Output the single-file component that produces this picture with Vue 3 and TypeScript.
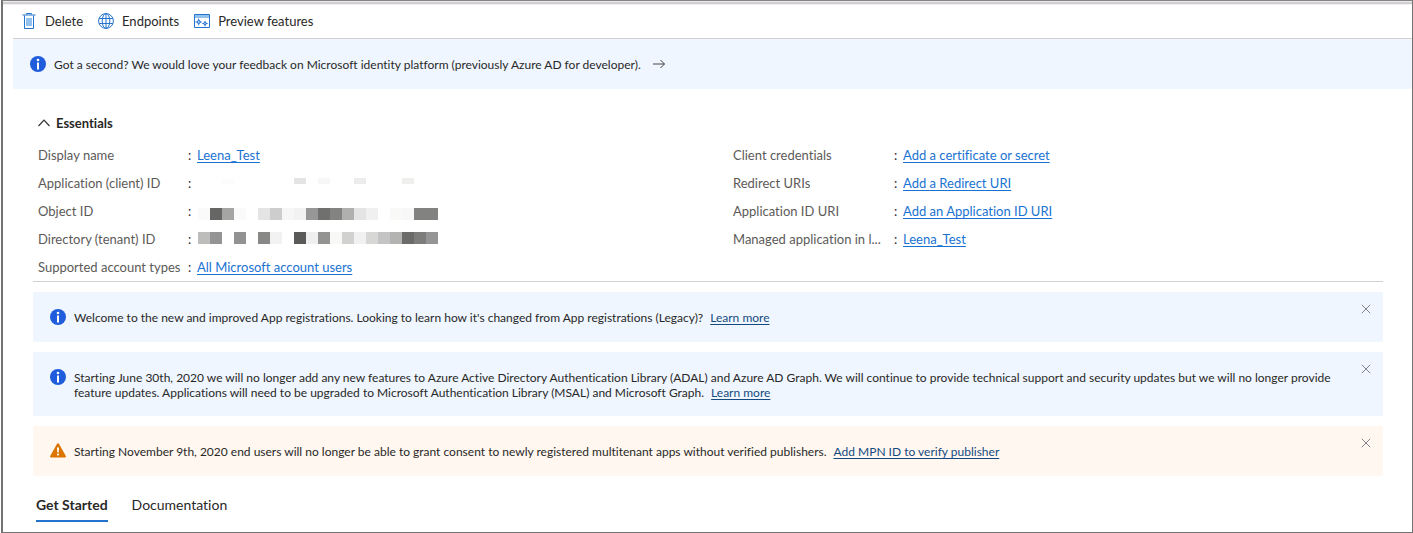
<script setup lang="ts">
interface Property {
  label: string
  link?: string
  mask?: { y: number; height: number; cells: string[] }
}

interface Notice {
  kind: 'info' | 'warning'
  text: string
  link: string
}

const leftProperties: Property[] = [
  { label: 'Display name', link: 'Leena_Test' },
  {
    label: 'Application (client) ID',
    mask: {
      y: 8,
      height: 6,
      cells: ['', '', '#fcfcfc', '', '', '', '', '', '#e4e4e4', '', '#f7f7f7', '', '', '#ececec', '', '', '', '#efefee', '', ''],
    },
  },
  {
    label: 'Object ID',
    mask: {
      y: 10,
      height: 12,
      cells: ['#fafafa', '#666664', '#a5a5a4', '#fafafa', '', '#e4e4e4', '#cdcdcd', '#f6f6f6', '#f2f2f2', '#979797', '#70706e', '#838382', '#b0b0af', '#e4e4e4', '#f0f0f0', '', '#f9f9f8', '#f7f7f7', '#828281', '#828281'],
    },
  },
  {
    label: 'Directory (tenant) ID',
    mask: {
      y: 6,
      height: 12,
      cells: ['#bdbdbc', '#949494', '', '#929292', '', '#888887', '#f2f2f2', '', '#5a5a58', '#efefef', '#939392', '#f8f8f7', '#d1d1d0', '#f1f1f1', '#d7d7d6', '#c4c4c4', '#b3b3b2', '#6b6b69', '#7d7d7c', '#959595'],
    },
  },
  { label: 'Supported account types', link: 'All Microsoft account users' },
]

const rightProperties: Property[] = [
  { label: 'Client credentials', link: 'Add a certificate or secret' },
  { label: 'Redirect URIs', link: 'Add a Redirect URI' },
  { label: 'Application ID URI', link: 'Add an Application ID URI' },
  { label: 'Managed application in l...', link: 'Leena_Test' },
]

const columns = [
  { name: 'identity', items: leftProperties },
  { name: 'credentials', items: rightProperties },
]

const notices: Notice[] = [
  {
    kind: 'info',
    text: "Welcome to the new and improved App registrations. Looking to learn how it's changed from App registrations (Legacy)?",
    link: 'Learn more',
  },
  {
    kind: 'info',
    text: 'Starting June 30th, 2020 we will no longer add any new features to Azure Active Directory Authentication Library (ADAL) and Azure AD Graph. We will continue to provide technical support and security updates but we will no longer provide feature updates. Applications will need to be upgraded to Microsoft Authentication Library (MSAL) and Microsoft Graph.',
    link: 'Learn more',
  },
  {
    kind: 'warning',
    text: 'Starting November 9th, 2020 end users will no longer be able to grant consent to newly registered multitenant apps without verified publishers.',
    link: 'Add MPN ID to verify publisher',
  },
]
</script>

<template>
  <main class="blade">
    <div class="toolbar" role="toolbar" aria-label="Application actions">
      <button type="button" class="command">
        <svg class="icon" viewBox="0 0 16 16" fill="none" stroke="#2474cf" aria-hidden="true">
          <path d="M1.500 2h13M5.500 1.500V.5h5v1M3.500 2.500v13h9v-13" />
          <path d="M5 5h6v8H5z" fill="#92c1ed" stroke="none" />
        </svg>
        <span>Delete</span>
      </button>
      <button type="button" class="command">
        <svg class="icon" viewBox="0 0 16 16" fill="none" stroke="#2474cf" aria-hidden="true">
          <circle cx="8" cy="8" r="7.400" />
          <ellipse cx="8" cy="8" rx="3.800" ry="7.400" />
          <path d="M8 .5v15M1.200 5.500h13.600M1.200 10.500h13.600" />
        </svg>
        <span>Endpoints</span>
      </button>
      <button type="button" class="command">
        <svg class="icon" viewBox="0 0 16 16" fill="none" stroke="#2474cf" aria-hidden="true">
          <path d="M.5 1.500h15v13H.5z" />
          <path d="M1 2h14v3H1z" fill="#92c1ed" stroke="none" />
          <path d="M4.700 6.900q.5 1.600 2.100 2.100-1.600.5-2.100 2.100-.5-1.600-2.100-2.100 1.600-.5 2.100-2.100z" stroke-width="1.200" />
          <path d="M11 8.800q.5 1.300 1.800 1.800-1.300.5-1.800 1.800-.5-1.300-1.800-1.800 1.300-.5 1.800-1.800z" stroke-width="1.100" />
        </svg>
        <span>Preview features</span>
      </button>
    </div>

    <a href="#feedback" class="feedback">
      <svg class="icon" viewBox="0 0 16 16" aria-hidden="true">
        <circle cx="8" cy="8" r="8" fill="#1f5ddd" />
        <path d="M7 6.500h2v7H7z" fill="#fff" />
        <circle cx="8" cy="4" r="1.300" fill="#fff" />
      </svg>
      <span>Got a second? We would love your feedback on Microsoft identity platform (previously Azure AD for developer).</span>
      <svg class="arrow" viewBox="0 0 12 10" fill="none" stroke="#444" aria-hidden="true">
        <path d="M0 5h11.500M7.500 1l4 4-4 4" />
      </svg>
    </a>

    <section class="essentials">
      <button type="button" class="essentials-toggle" aria-expanded="true">
        <svg class="chevron" viewBox="0 0 12 8" fill="none" stroke="#323130" stroke-width="1.200" aria-hidden="true">
          <path d="M.5 7 6 1.200 11.500 7" />
        </svg>
        <span>Essentials</span>
      </button>
      <div class="columns">
        <dl v-for="column in columns" :key="column.name" :class="['properties', column.name]">
          <div v-for="item in column.items" :key="item.label" class="property">
            <dt>{{ item.label }}</dt>
            <dd>
              <span class="colon">:</span>
              <a v-if="item.link" href="#property">{{ item.link }}</a>
              <svg v-else-if="item.mask" class="mask" viewBox="0 0 240 28" shape-rendering="crispEdges" aria-hidden="true">
                <template v-for="(fill, i) in item.mask.cells" :key="i">
                  <rect v-if="fill" :x="i * 12" :y="item.mask.y" width="12" :height="item.mask.height" :fill="fill" />
                </template>
              </svg>
            </dd>
          </div>
        </dl>
      </div>
    </section>

    <section class="notices" aria-label="Notices">
      <div v-for="notice in notices" :key="notice.text" :class="['notice', notice.kind]">
        <svg v-if="notice.kind === 'info'" class="icon" viewBox="0 0 16 16" aria-hidden="true">
          <circle cx="8" cy="8" r="8" fill="#1f5ddd" />
          <path d="M7 6.500h2v7H7z" fill="#fff" />
          <circle cx="8" cy="4" r="1.300" fill="#fff" />
        </svg>
        <svg v-else class="icon" viewBox="0 0 16 16" aria-hidden="true">
          <path d="M6.800 1.200q1.200-1.800 2.400 0l6.500 11.600q.8 1.700-.9 1.700H1.200q-1.700 0-.9-1.700z" fill="#db7500" />
          <path d="M7 4.500h2l-.3 5H7.300z" fill="#fff" />
          <circle cx="8" cy="11.500" r="1.100" fill="#fff" />
        </svg>
        <p>{{ notice.text }}<a href="#details">{{ notice.link }}</a></p>
        <button type="button" class="close" aria-label="Dismiss">
          <svg viewBox="0 0 10 10" fill="none" stroke="#77777f" stroke-width=".9" aria-hidden="true">
            <path d="M.8.8l8.400 8.400M9.200.8.8 9.200" />
          </svg>
        </button>
      </div>
    </section>

    <nav class="tabs" aria-label="Sections">
      <a href="#get-started" class="tab active" aria-current="page">Get Started</a>
      <a href="#documentation" class="tab">Documentation</a>
    </nav>
  </main>
</template>

<style>
body {
  margin: 0;
  background: #fff;
}
</style>

<style scoped>
.blade {
  box-sizing: border-box;
  min-height: 100vh;
  margin-left: 1px;
  padding-left: 10px;
  border: 1px solid #737373;
  border-left: 2px solid #737373;
  border-top-color: #858286;
  box-shadow: inset 0 1px #eeecee, inset 0 3px #d2cfd3, inset 0 4px #f1f0f1;
  color: #292827;
  font-family: Lato, "Noto Sans", sans-serif;
  font-size: 12px;
  font-variant-ligatures: none;
  line-height: 15px;
}

button {
  padding: 0;
  border: 0;
  background: none;
  color: inherit;
  font: inherit;
}

.icon {
  flex: none;
  width: 16px;
  height: 16px;
}

.toolbar {
  display: flex;
  gap: 15px;
  height: 35px;
  padding: 2px 8px 0;
  border-bottom: 1px solid #d2d0d0;
}

.command {
  display: flex;
  align-items: center;
  gap: 8px;
  font-size: 13px;
  line-height: 18px;
}

.feedback {
  display: flex;
  align-items: center;
  gap: 8px;
  min-height: 50px;
  padding-left: 17px;
  background: #eff6ff;
  border-radius: 2px;
  color: inherit;
  text-decoration: none;
}

.arrow {
  width: 12px;
  height: 10px;
  margin-left: 4px;
}

.essentials {
  margin: 0 29px 0 20px;
  padding: 24px 5px 0;
  border-bottom: 1px solid #d2d0d0;
}

.essentials-toggle {
  display: flex;
  align-items: center;
  gap: 6px;
  height: 20px;
  font-size: 13px;
  font-weight: 700;
}

.chevron {
  width: 12px;
  height: 8px;
}

.columns {
  display: grid;
  grid-template-columns: 695fr 645fr;
  margin-top: 9px;
  font-size: 13px;
}

.properties {
  margin: 0;
}

.property {
  display: grid;
  grid-template-columns: 150px 1fr;
  height: 28px;
  line-height: 26px;
}

.credentials .property {
  grid-template-columns: 161px 1fr;
}

.identity .property:last-child {
  height: 27px;
}

dt {
  color: #5c5a58;
  white-space: nowrap;
}

dd {
  display: flex;
  margin: 0;
}

.colon {
  width: 9px;
}

dd a {
  color: #1a73d2;
  text-underline-offset: 2px;
}

.mask {
  width: 240px;
  height: 28px;
  margin-left: 1px;
}

.notices {
  display: grid;
  gap: 10px;
  margin: 10px 29px 0 20px;
}

.notice {
  box-sizing: border-box;
  display: flex;
  align-items: flex-start;
  gap: 8px;
  min-height: 50px;
  padding: 17px 12px 16px 17px;
  border-radius: 2px;
}

.notice.info {
  background: #eff6ff;
}

.notice.warning {
  background: #fff7f0;
}

.notice p {
  flex: 1;
  margin: 0;
  padding: 1px 0 0;
}

.notice p a {
  margin-left: 7px;
  color: #154a80;
  text-underline-offset: 2px;
}

.close {
  flex: none;
  width: 10px;
  height: 10px;
  margin: -5px 0 0 16px;
}

.close svg {
  display: block;
  width: 10px;
  height: 10px;
}

.tabs {
  display: flex;
  gap: 24px;
  margin: 19px 23px 0;
}

.tab {
  padding-bottom: 5px;
  border-bottom: 2px solid transparent;
  color: inherit;
  font-size: 14px;
  line-height: 20px;
  text-decoration: none;
}

.tab.active {
  border-bottom-color: #2474cf;
  font-weight: 700;
}
</style>
